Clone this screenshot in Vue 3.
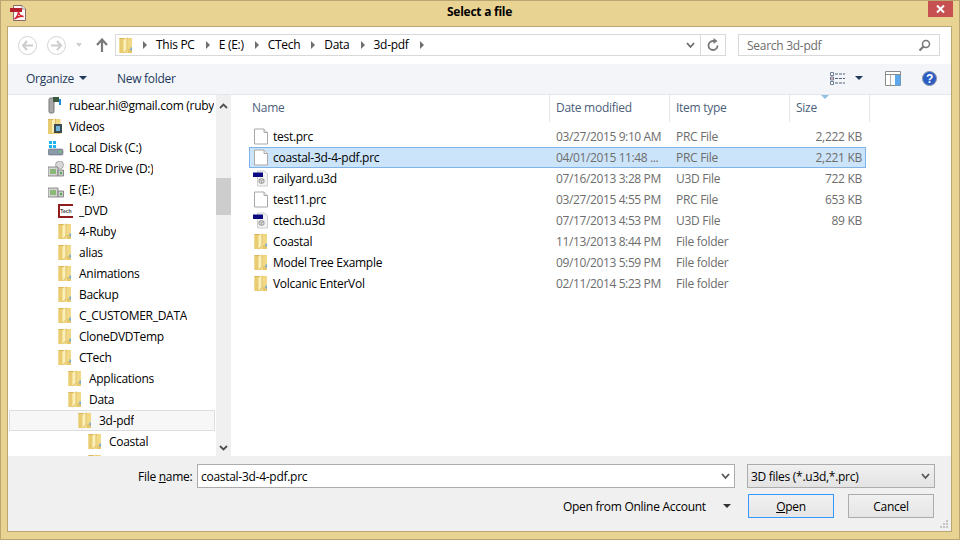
<script setup>
const crumbs = ['This PC', 'E (E:)', 'CTech', 'Data', '3d-pdf']
const tree = [
  { name: 'rubear.hi@gmail.com (ruby', level: 0, icon: 'phone' },
  { name: 'Videos', level: 0, icon: 'videos' },
  { name: 'Local Disk (C:)', level: 0, icon: 'disk' },
  { name: 'BD-RE Drive (D:)', level: 0, icon: 'bd' },
  { name: 'E (E:)', level: 0, icon: 'drive' },
  { name: '_DVD', level: 1, icon: 'tech' },
  { name: '4-Ruby', level: 1, icon: 'folder' },
  { name: 'alias', level: 1, icon: 'folder' },
  { name: 'Animations', level: 1, icon: 'folder' },
  { name: 'Backup', level: 1, icon: 'folder' },
  { name: 'C_CUSTOMER_DATA', level: 1, icon: 'folder' },
  { name: 'CloneDVDTemp', level: 1, icon: 'folder' },
  { name: 'CTech', level: 1, icon: 'folder' },
  { name: 'Applications', level: 2, icon: 'folder' },
  { name: 'Data', level: 2, icon: 'folder' },
  { name: '3d-pdf', level: 3, icon: 'folder', current: true },
  { name: 'Coastal', level: 4, icon: 'folder' },
  { name: '', level: 4, icon: 'folder' }
]
const files = [
  { name: 'test.prc', date: '03/27/2015 9:10 AM', type: 'PRC File', size: '2,222 KB', icon: 'page' },
  { name: 'coastal-3d-4-pdf.prc', date: '04/01/2015 11:48 ...', type: 'PRC File', size: '2,221 KB', icon: 'page', selected: true },
  { name: 'railyard.u3d', date: '07/16/2013 3:28 PM', type: 'U3D File', size: '722 KB', icon: 'u3d' },
  { name: 'test11.prc', date: '03/27/2015 4:55 PM', type: 'PRC File', size: '653 KB', icon: 'page' },
  { name: 'ctech.u3d', date: '07/17/2013 4:53 PM', type: 'U3D File', size: '89 KB', icon: 'u3d' },
  { name: 'Coastal', date: '11/13/2013 8:44 PM', type: 'File folder', size: '', icon: 'folder' },
  { name: 'Model Tree Example', date: '09/10/2013 5:59 PM', type: 'File folder', size: '', icon: 'folder' },
  { name: 'Volcanic EnterVol', date: '02/11/2014 5:23 PM', type: 'File folder', size: '', icon: 'folder' }
]
const indent = (level) => ({ paddingLeft: 39 + level * 10 + 'px' })
</script>

<template>
  <div class="window">
    <svg class="defs" width="0" height="0">
      <defs>
        <symbol id="folder" viewBox="0 0 13 17">
          <path d="M0 1h12.500v15H0z" fill="#f0d67f" />
          <path d="M0 1h4v15H0z" fill="#e9cb72" />
          <path d="M0 1h5v1H0z" fill="#d8b65e" />
          <path d="M4 16V3l3.500-2.500V13z" fill="#fbf0b8" />
          <path d="M7.500 .5V13L4 16" fill="none" stroke="#d3b159" stroke-width=".8" />
          <path d="M8 3h4.500v13H4.500l3.500-2.500z" fill="#f1d988" />
          <path d="M8.500 12h4v4h-4z" fill="#e6c66c" />
          <path d="M11 10.500h1.300v3H11z" fill="#58a6dc" />
        </symbol>
        <symbol id="page" viewBox="0 0 16 16">
          <path d="M1.500 .5h9.500l3.500 3.500v11.500h-13z" fill="#fff" stroke="#a8a8a8" />
          <path d="M11 .5v3.500h3.500" fill="#eee" stroke="#a8a8a8" />
        </symbol>
        <symbol id="u3d" viewBox="0 0 16 16">
          <path d="M4.500 .5h7l3 3v12h-10z" fill="#f4f4f4" stroke="#cfcfcf" />
          <path d="M0 2h10v4.500H0z" fill="#0a0a80" />
          <path d="M6 9l2.500-1 2.500 1v3l-2.500 1-2.500-1z" fill="#ddd" stroke="#888" stroke-width=".8" />
          <path d="M6 9l2.500 1 2.500-1M8.500 10v3" fill="none" stroke="#888" stroke-width=".6" />
        </symbol>
      </defs>
    </svg>

    <header class="titlebar">
      <svg class="app-icon" width="16" height="16" viewBox="0 0 16 16">
        <path d="M3.500 .5h8.500l3.500 3.500v11.500h-12z" fill="#fdf8f8" stroke="#8d6a6a" />
        <path d="M12 .5v3.500h3.500" fill="#eee" stroke="#8d6a6a" stroke-width=".7" />
        <path d="M0 3h12v4H0z" fill="#b3202b" />
        <path d="M8.500 6c0 3.500-2 6.500-4 8 2.500-2.200 6-3.300 9-2.500-3-.3-5-2.500-5-5.500z" fill="none" stroke="#d0202c" stroke-width="1.400" />
      </svg>
      <span class="title">Select a file</span>
      <div class="close">
        <svg width="11" height="10" viewBox="0 0 11 10"><path d="M2 1.500l7 7M9 1.500l-7 7" stroke="#fff" stroke-width="2" /></svg>
      </div>
    </header>

    <main class="client">
      <nav class="navbar">
        <div class="round">
          <svg width="13" height="11" viewBox="0 0 13 11"><path d="M6 1 2 5.500 6 10M2 5.500h10" fill="none" stroke="#cdcdcd" stroke-width="2" /></svg>
        </div>
        <div class="round fwd">
          <svg width="13" height="11" viewBox="0 0 13 11"><path d="M7 1l4 4.500L7 10M11 5.500H1" fill="none" stroke="#cdcdcd" stroke-width="2" /></svg>
        </div>
        <span class="nav-caret"></span>
        <svg class="up" width="12" height="14" viewBox="0 0 12 14"><path d="M6 14V2M1 7l5-5.500L11 7" fill="none" stroke="#7a7a7a" stroke-width="2.200" /></svg>
        <div class="address">
          <svg class="crumb-folder" width="14" height="17"><use href="#folder" /></svg>
          <template v-for="c in crumbs" :key="c">
            <span class="crumb-arrow"></span>
            <span class="crumb">{{ c }}</span>
          </template>
          <span class="crumb-arrow"></span>
          <span class="grow"></span>
          <svg class="chev" width="9" height="7" viewBox="0 0 9 7"><path d="M1 1l3.500 4L8 1" fill="none" stroke="#6a6a6a" stroke-width="1.800" /></svg>
          <div class="refresh">
            <svg width="14" height="14" viewBox="0 0 14 14"><path d="M11.500 7.500A4.500 4.500 0 1 1 7 3h1" fill="none" stroke="#777" stroke-width="1.800" /><path d="M7.500 0l4 3-4 3z" fill="#777" /></svg>
          </div>
        </div>
        <div class="search">
          <span>Search 3d-pdf</span>
          <svg width="13" height="13" viewBox="0 0 13 13"><circle cx="8" cy="5" r="3.500" fill="none" stroke="#777" stroke-width="1.500" /><path d="M5.500 7.500 1.500 11.500" stroke="#777" stroke-width="2.200" /></svg>
        </div>
      </nav>

      <div class="toolbar">
        <span class="tool">Organize</span>
        <span class="caret"></span>
        <span class="tool newfolder">New folder</span>
        <span class="grow"></span>
        <svg class="views" width="16" height="13" viewBox="0 0 16 13">
          <path d="M.5.500h3v3h-3zM.5 5h3v3h-3zM.5 9.500h3v3h-3z" fill="#fff" stroke="#6d7f99" />
          <path d="M5 2h10M5 6.500h10M5 11h10" stroke="#4d6080" stroke-dasharray="3 1" />
          <path d="M1.500 5.800h1v1.400h-1z" fill="#d33" />
        </svg>
        <span class="caret view-caret"></span>
        <svg class="pane" width="16" height="15" viewBox="0 0 16 15">
          <path d="M.5.500h15v14H.5z" fill="#fff" stroke="#8a8a8a" />
          <path d="M.5 3.500h15" stroke="#8a8a8a" />
          <path d="M5.500 3.500v11" stroke="#aaa" />
          <path d="M10 4h5.500v10.500H10z" fill="#5ba7ea" />
        </svg>
        <svg class="help" width="15" height="15" viewBox="0 0 15 15">
          <circle cx="7.500" cy="7.500" r="7" fill="#2a5cc4" stroke="#8a93a8" />
          <text x="7.500" y="11.500" class="help-q">?</text>
        </svg>
      </div>

      <div class="browser">
        <aside class="tree">
          <div class="tree-items">
            <div v-for="(t, i) in tree" :key="i" class="tree-row" :class="{ current: t.current }" :style="indent(t.level)">
              <span class="tree-icon">
                <svg v-if="t.icon === 'folder'" width="14" height="17"><use href="#folder" /></svg>
                <svg v-else-if="t.icon === 'videos'" width="15" height="17" viewBox="0 0 15 17">
                  <use href="#folder" width="13" height="17" />
                  <path d="M6 6h8v9H6z" fill="#3c4a52" /><path d="M8 8h4v5H8z" fill="#6fb5d8" />
                </svg>
                <svg v-else-if="t.icon === 'phone'" width="16" height="17" viewBox="0 0 16 17">
                  <rect x="1" y="1" width="5" height="15" rx="1.500" fill="#a8a8a8" stroke="#777" />
                  <path d="M5 0h6v5H5z" fill="#3c5a3c" /><path d="M12 2v6" stroke="#1b8de0" stroke-width="2" />
                </svg>
                <svg v-else-if="t.icon === 'disk'" width="16" height="16" viewBox="0 0 16 16">
                  <path d="M1 1h3v3H1zM5 1h3v3H5zM1 5h3v3H1zM5 5h3v3H5z" fill="#1bb3ee" />
                  <rect x="0" y="9" width="15" height="6" rx="1.500" fill="#8a9aa8" stroke="#667" stroke-width=".6" />
                  <path d="M11 11h2v1.500h-2z" fill="#5fdc5f" />
                </svg>
                <svg v-else-if="t.icon === 'tech'" width="16" height="14" viewBox="0 0 16 14">
                  <path d="M15 1H1v12h14" fill="#fff" stroke="#8f1d1d" stroke-width="2" />
                  <text x="8" y="9" class="tech">Tech</text>
                </svg>
                <svg v-else width="16" height="16" viewBox="0 0 16 16">
                  <circle v-if="t.icon === 'bd'" cx="11.500" cy="4" r="4" fill="#d8d8d8" stroke="#888" stroke-width=".6" />
                  <path d="M0 6h10v9H0z" fill="#d5d5d5" stroke="#777" stroke-width=".8" />
                  <path d="M2 8h6v5H2z" fill="#8ab878" />
                  <path d="M10 9h5.500v6H10z" fill="#c8c8c8" stroke="#777" stroke-width=".8" />
                  <path d="M12 11h2v2h-2z" fill="#4caf50" />
                </svg>
              </span>
              <span class="tree-label">{{ t.name }}</span>
            </div>
          </div>
          <div class="scrollbar">
            <svg width="9" height="6" viewBox="0 0 9 6"><path d="M1 5l3.500-3.500L8 5" fill="none" stroke="#505050" stroke-width="1.800" /></svg>
            <span class="thumb"></span>
            <span class="grow"></span>
            <svg width="9" height="6" viewBox="0 0 9 6"><path d="M1 1l3.500 3.500L8 1" fill="none" stroke="#505050" stroke-width="1.800" /></svg>
          </div>
        </aside>

        <section class="list">
          <div class="list-head">
            <div class="col-name head">Name</div>
            <div class="col-date head">Date modified</div>
            <div class="col-type head">Item type</div>
            <div class="col-size head">Size<i class="sort"></i></div>
            <div class="col-end head"></div>
          </div>
          <div class="rows">
            <div v-for="f in files" :key="f.name" class="row" :class="{ selected: f.selected }">
              <div class="cell-name">
                <svg width="16" height="17"><use :href="'#' + f.icon" /></svg>
                <span>{{ f.name }}</span>
              </div>
              <div class="cell-date">{{ f.date }}</div>
              <div class="cell-type">{{ f.type }}</div>
              <div class="cell-size">{{ f.size }}</div>
            </div>
          </div>
        </section>
      </div>

      <footer class="footer">
        <div class="line">
          <label class="fname">File <u>n</u>ame:</label>
          <div class="input">
            <span>coastal-3d-4-pdf.prc</span>
            <svg width="9" height="7" viewBox="0 0 9 7"><path d="M1 1l3.500 4L8 1" fill="none" stroke="#555" stroke-width="1.800" /></svg>
          </div>
          <div class="filter">
            <span>3D files (*.u3d,*.prc)</span>
            <svg width="9" height="7" viewBox="0 0 9 7"><path d="M1 1l3.500 4L8 1" fill="none" stroke="#555" stroke-width="1.800" /></svg>
          </div>
        </div>
        <div class="line actions">
          <span class="online">Open from Online Account</span>
          <span class="caret online-caret"></span>
          <button class="btn primary"><u>O</u>pen</button>
          <button class="btn">Cancel</button>
        </div>
        <svg class="grip" width="10" height="10" viewBox="0 0 10 10">
          <path d="M7 1h2v2H7zM4 4h2v2H4zM7 4h2v2H7zM1 7h2v2H1zM4 7h2v2H4zM7 7h2v2H7z" fill="#c4c4c4" />
        </svg>
      </footer>
    </main>
  </div>
</template>

<style>
html, body { margin: 0; padding: 0; }
</style>

<style scoped>
.window {
  position: relative;
  width: 960px;
  height: 540px;
  box-sizing: border-box;
  background: #e8d392;
  border: 1px solid #b9a671;
  padding: 0 7px 7px 6px;
  display: flex;
  flex-direction: column;
  overflow: hidden;
  font-family: "Open Sans", "Noto Sans", sans-serif;
  font-size: 12px;
  letter-spacing: -0.28px;
  color: #000;
}
.defs { position: absolute; }
.grow { flex: 1; }
.titlebar {
  height: 25px;
  flex: none;
  position: relative;
  display: flex;
  align-items: flex-start;
  justify-content: center;
}
.app-icon { position: absolute; left: 3px; top: 4px; }
.title { font-weight: 700; line-height: 21px; letter-spacing: -0.25px; }
.close {
  position: absolute;
  right: -1px;
  top: 0;
  width: 25px;
  height: 16px;
  background: #c75050;
  display: flex;
  align-items: center;
  justify-content: center;
}
.client {
  flex: 1;
  min-height: 0;
  display: flex;
  flex-direction: column;
  background: #fff;
  border: 1px solid #b9a671;
}

/* nav */
.navbar {
  height: 37px;
  flex: none;
  display: flex;
  align-items: center;
  box-sizing: border-box;
  padding-left: 10px;
  padding-bottom: 1px;
}
.round {
  width: 19px;
  height: 19px;
  box-sizing: border-box;
  border: 1px solid #d4d4d4;
  border-radius: 50%;
  display: flex;
  align-items: center;
  justify-content: center;
  flex: none;
}
.fwd { margin-left: 10px; }
.nav-caret {
  margin-left: 10px;
  border: 3.500px solid transparent;
  border-top: 4px solid #d0d0d0;
  border-bottom: 0;
  flex: none;
}
.up { margin-left: 14px; flex: none; }
.address {
  margin-left: 7px;
  width: 611px;
  height: 22px;
  box-sizing: border-box;
  border: 1px solid #d9d9d9;
  display: flex;
  align-items: center;
  padding-left: 3px;
  flex: none;
}
.crumb-folder { margin-right: 10px; }
.crumb-arrow {
  border: 4px solid transparent;
  border-left: 4px solid #6f6f6f;
  border-right: 0;
  margin-right: 9px;
  flex: none;
}
.crumb { margin-right: 11px; line-height: 20px; }
.chev { margin-right: 5px; }
.refresh {
  width: 25px;
  height: 20px;
  border-left: 1px solid #d9d9d9;
  display: flex;
  align-items: center;
  justify-content: center;
  box-sizing: border-box;
}
.search {
  margin-left: 12px;
  width: 202px;
  height: 22px;
  box-sizing: border-box;
  border: 1px solid #d9d9d9;
  display: flex;
  align-items: center;
  justify-content: space-between;
  padding: 0 8px 0 8px;
  color: #6d6d6d;
  flex: none;
}

/* toolbar */
.toolbar {
  height: 31px;
  flex: none;
  background: #f3f5f8;
  border-bottom: 1px solid #e3e7ec;
  box-sizing: border-box;
  display: flex;
  align-items: center;
  padding-left: 18px;
  padding-bottom: 2px;
}
.tool { color: #1e395b; }
.caret {
  border: 4px solid transparent;
  border-top: 4px solid #1e395b;
  border-bottom: 0;
  flex: none;
}
.toolbar > .caret { margin-left: 5px; }
.newfolder { margin-left: 30px; }
.views { margin-right: 9px; flex: none; }
.toolbar > .view-caret { margin-left: 0; margin-right: 22px; }
.pane { margin-right: 21px; flex: none; }
.help { margin-right: 14px; flex: none; }
.help-q { font: 700 12px "Liberation Sans", sans-serif; fill: #fff; text-anchor: middle; }

/* browser */
.browser {
  height: 361px;
  flex: none;
  display: flex;
  overflow: hidden;
}
.tree {
  width: 223px;
  flex: none;
  display: flex;
  overflow: hidden;
}
.tree-items {
  width: 208px;
  flex: none;
  overflow: hidden;
}
.tree-row {
  height: 21px;
  box-sizing: border-box;
  display: flex;
  align-items: center;
  white-space: nowrap;
  overflow: hidden;
  margin-left: 1px;
  margin-right: 1px;
  border: 1px solid transparent;
}
.tree-row.current {
  background: #f7f7f7;
  border-color: #dedede;
}
.tree-icon {
  width: 21px;
  flex: none;
  display: flex;
  align-items: center;
  margin-left: -1px;
}
.tree-label { overflow: hidden; }
.tech { font: 700 5px "Liberation Sans", sans-serif; fill: #444; text-anchor: middle; letter-spacing: 0; }
.scrollbar {
  width: 15px;
  flex: none;
  background: #f0f0f0;
  display: flex;
  flex-direction: column;
  align-items: center;
  padding: 8px 0 5px;
  box-sizing: border-box;
}
.thumb {
  width: 15px;
  height: 37px;
  margin-top: 69px;
  background: #cdcdcd;
  flex: none;
}
.list {
  flex: 1;
  min-width: 0;
  margin-left: 2px;
}
.list-head {
  height: 27px;
  display: flex;
}
.head {
  box-sizing: border-box;
  color: #4c607a;
  padding: 4px 0 0 6px;
  line-height: 18px;
  border-right: 1px solid #e5e5e5;
  position: relative;
}
.col-name { width: 317px; padding-left: 19px; }
.col-date { width: 120px; }
.col-type { width: 120px; }
.col-size { width: 80px; }
.col-end { border-right: 0; flex: 1; }
.sort {
  position: absolute;
  left: 31px;
  top: 0;
  border: 4px solid transparent;
  border-top: 4px solid #8ec0e4;
  border-bottom: 0;
}
.rows { padding-top: 4px; padding-left: 16px; }
.row {
  height: 21px;
  width: 617px;
  box-sizing: border-box;
  border: 1px solid transparent;
  display: flex;
  align-items: center;
  color: #6d6d6d;
}
.row.selected {
  background: #cce4f9;
  border-color: #7eb4ea;
}
.cell-name {
  width: 306px;
  flex: none;
  display: flex;
  align-items: center;
  color: #000;
  padding-left: 3px;
  box-sizing: border-box;
}
.cell-name span { margin-left: 4px; }
.cell-date { width: 120px; flex: none; letter-spacing: -0.38px; }
.cell-type { width: 100px; flex: none; }
.cell-size { flex: 1; text-align: right; padding-right: 3px; }

/* footer */
.footer {
  flex: 1;
  background: #f0f0f0;
  position: relative;
  padding-top: 8px;
  box-sizing: border-box;
}
.line { display: flex; align-items: center; }
.fname { margin-left: 130px; width: 59px; flex: none; }
.input {
  width: 538px;
  height: 24px;
  flex: none;
  box-sizing: border-box;
  background: #fff;
  border: 1px solid #acacac;
  display: flex;
  align-items: center;
  justify-content: space-between;
  padding: 0 4px 0 3px;
}
.filter {
  margin-left: 12px;
  width: 188px;
  height: 24px;
  flex: none;
  box-sizing: border-box;
  background: linear-gradient(#f0f0f0, #e3e3e3);
  border: 1px solid #acacac;
  display: flex;
  align-items: center;
  justify-content: space-between;
  padding: 0 4px 0 3px;
}
.actions { margin-top: 6px; padding-left: 555px; }
.online { width: 160px; flex: none; }
.online-caret { margin-right: 17px; border-top-color: #333; margin-left: 0; }
.btn {
  width: 86px;
  height: 24px;
  box-sizing: border-box;
  border: 1px solid #acacac;
  background: linear-gradient(#f0f0f0, #e5e5e5);
  font: inherit;
  letter-spacing: inherit;
  color: #000;
  padding: 0;
  flex: none;
  margin-left: 14px;
}
.btn.primary { border-color: #3399ff; margin-left: 0; }
.grip { position: absolute; right: 2px; bottom: 2px; }
</style>
